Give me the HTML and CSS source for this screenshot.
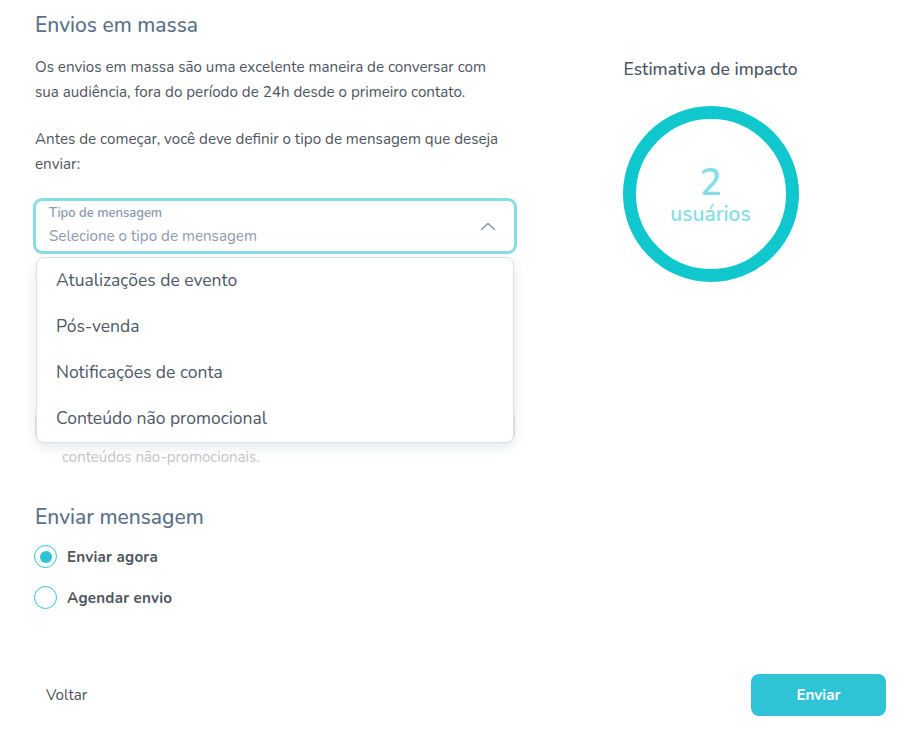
FILE: index.html
```html
<!DOCTYPE html>
<html lang="pt-BR">
<head>
<meta charset="utf-8">
<title>Envios em massa</title>
<link rel="stylesheet" href="styles.css">
</head>
<body>
<div class="page">
  <div class="main">
    <section class="left">
      <h1 class="title">Envios em massa</h1>
      <p class="text">Os envios em massa são uma excelente maneira de conversar com sua audiência, fora do período de 24h desde o primeiro contato.</p>
      <p class="text">Antes de começar, você deve definir o tipo de mensagem que deseja enviar:</p>

      <div class="field">
        <div class="select">
          <div class="select-body">
            <span class="select-label">Tipo de mensagem</span>
            <span class="select-value">Selecione o tipo de mensagem</span>
          </div>
          <svg class="chevron" width="16" height="10" viewBox="0 0 16 10"><path d="M1.5 8.5 L8 2.5 L14.5 8.5" fill="none" stroke="#8797ad" stroke-width="1.5" stroke-linecap="round" stroke-linejoin="round"/></svg>
        </div>

        <div class="under">
          <div class="marks">
            <span class="mark m1"></span>
            <span class="mark m2"></span>
            <span class="mark m3"></span>
            <span class="mark m4"></span>
            <span class="mark m5"></span>
          </div>
          <div class="hint-box"></div>
          <p class="hint">conteúdos não-promocionais.</p>
        </div>

        <ul class="menu">
          <li class="menu-item">Atualizações de evento</li>
          <li class="menu-item">Pós-venda</li>
          <li class="menu-item">Notificações de conta</li>
          <li class="menu-item">Conteúdo não promocional</li>
        </ul>
      </div>

      <h2 class="subtitle">Enviar mensagem</h2>
      <div class="radios">
        <label class="radio"><span class="dot checked"></span><span class="radio-label">Enviar agora</span></label>
        <label class="radio"><span class="dot"></span><span class="radio-label">Agendar envio</span></label>
      </div>
    </section>

    <aside class="right">
      <h3 class="impact-title">Estimativa de impacto</h3>
      <div class="ring">
        <span class="ring-num">2</span>
        <span class="ring-unit">usuários</span>
      </div>
    </aside>
  </div>

  <footer class="footer">
    <button class="btn-back">Voltar</button>
    <button class="btn-send">Enviar</button>
  </footer>
</div>
</body>
</html>
```

FILE: styles.css
```css
* { box-sizing: border-box; }
html, body { margin: 0; padding: 0; background: #fff; }
body {
  font-family: "Nunito", "Lato", "Noto Sans", "Liberation Sans", sans-serif;
  color: #4f5560;
}
.page {
  width: 914px;
  height: 735px;
  display: flex;
  flex-direction: column;
  padding: 11px 28px 19px 35px;
}
.main {
  display: flex;
  flex: 1;
}
.left {
  width: 482px;
  display: flex;
  flex-direction: column;
}
.title {
  margin: 0 0 16px;
  font-size: 21px;
  font-weight: 500;
  color: #5b7089;
  line-height: 28px;
}
.text {
  margin: 0 0 22px;
  max-width: 470px;
  font-size: 15.2px;
  line-height: 25px;
  color: #4f5560;
}
.text + .text { margin-bottom: 21px; max-width: 482px; }
.field {
  position: relative;
  margin-left: -2px;
}
.select {
  width: 484px;
  height: 56px;
  border: 3px solid #86dde8;
  border-radius: 9px;
  display: flex;
  align-items: center;
  padding: 0 18px 0 13px;
}
.select-body {
  flex: 1;
  display: flex;
  flex-direction: column;
}
.select-label {
  font-size: 13px;
  font-weight: 600;
  color: #8898ad;
  line-height: 16px;
  margin-top: -1px;
}
.select-value {
  font-size: 15.2px;
  color: #8c9ab0;
  line-height: 20px;
  margin-top: 5px;
}
.chevron { margin-top: -1px; }
.under {
  position: relative;
}
.marks {
  height: 161px;
  display: flex;
  flex-direction: column;
  padding: 26px 0 0 3px;
}
.mark {
  display: block;
  width: 2px;
  background: #e3b27a;
}
.m1 { height: 10px; margin-bottom: 19px; background: #eed2a8; }
.m2 { height: 5px; margin-bottom: 23px; }
.m3 { height: 4px; margin-bottom: 18px; }
.m4 { height: 6px; margin-bottom: 17px; background: #c8cdd2; }
.m5 { height: 8px; }
.hint-box {
  margin: 0 0 0 2px;
  width: 480px;
  height: 25px;
  border: 1px solid #dfe3e6;
  border-top: none;
  border-radius: 0 0 6px 6px;
}
.hint {
  margin: 7px 0 0 29px;
  font-size: 15px;
  color: #c3c6cb;
  line-height: 20px;
}
.menu {
  position: absolute;
  top: 59px;
  left: 3px;
  width: 478px;
  margin: 0;
  padding: 0;
  list-style: none;
  background: #fff;
  border: 1px solid #d6e3e8;
  border-radius: 8px;
  box-shadow: 0 4px 12px rgba(60, 80, 100, 0.14);
}
.menu-item {
  height: 46px;
  line-height: 44px;
  padding-left: 19px;
  font-size: 17.5px;
  color: #4d5868;
}
.subtitle {
  margin: 36px 0 14px;
  font-size: 21px;
  font-weight: 500;
  color: #5b7089;
  line-height: 28px;
}
.radios {
  display: flex;
  flex-direction: column;
  gap: 18px;
}
.radio {
  display: flex;
  align-items: center;
  gap: 10px;
  margin-left: -1px;
}
.dot {
  width: 23px;
  height: 23px;
  border: 1.5px solid #2ec4d6;
  border-radius: 50%;
  display: flex;
  align-items: center;
  justify-content: center;
}
.dot.checked::after {
  content: "";
  width: 12px;
  height: 12px;
  border-radius: 50%;
  background: #2ec4d6;
}
.radio-label {
  font-size: 15.2px;
  font-weight: 700;
  color: #4f5560;
  letter-spacing: 0.2px;
}
.right {
  flex: 1;
  display: flex;
  flex-direction: column;
  align-items: center;
  padding-left: 18px;
  padding-top: 46px;
}
.impact-title {
  margin: 0 0 25px;
  font-size: 17.5px;
  font-weight: 500;
  color: #4a5565;
  line-height: 24px;
}
.ring {
  width: 176px;
  height: 176px;
  border: 13px solid #0fc7cc;
  border-radius: 50%;
  display: flex;
  flex-direction: column;
  align-items: center;
  justify-content: center;
  color: #86dde8;
  padding-top: 2px;
}
.ring-num {
  font-size: 37px;
  font-weight: 600;
  line-height: 38px;
}
.ring-unit {
  font-size: 21px;
  font-weight: 600;
  line-height: 24px;
}
.footer {
  display: flex;
  justify-content: space-between;
  align-items: center;
  height: 42px;
}
.btn-back {
  border: none;
  background: none;
  padding: 0 0 0 11px;
  font-family: inherit;
  font-size: 15.2px;
  color: #4f5560;
}
.btn-send {
  width: 135px;
  height: 42px;
  border: none;
  border-radius: 8px;
  background: #2ec4d6;
  color: #fff;
  font-family: inherit;
  font-size: 15.2px;
  font-weight: 700;
}
```
